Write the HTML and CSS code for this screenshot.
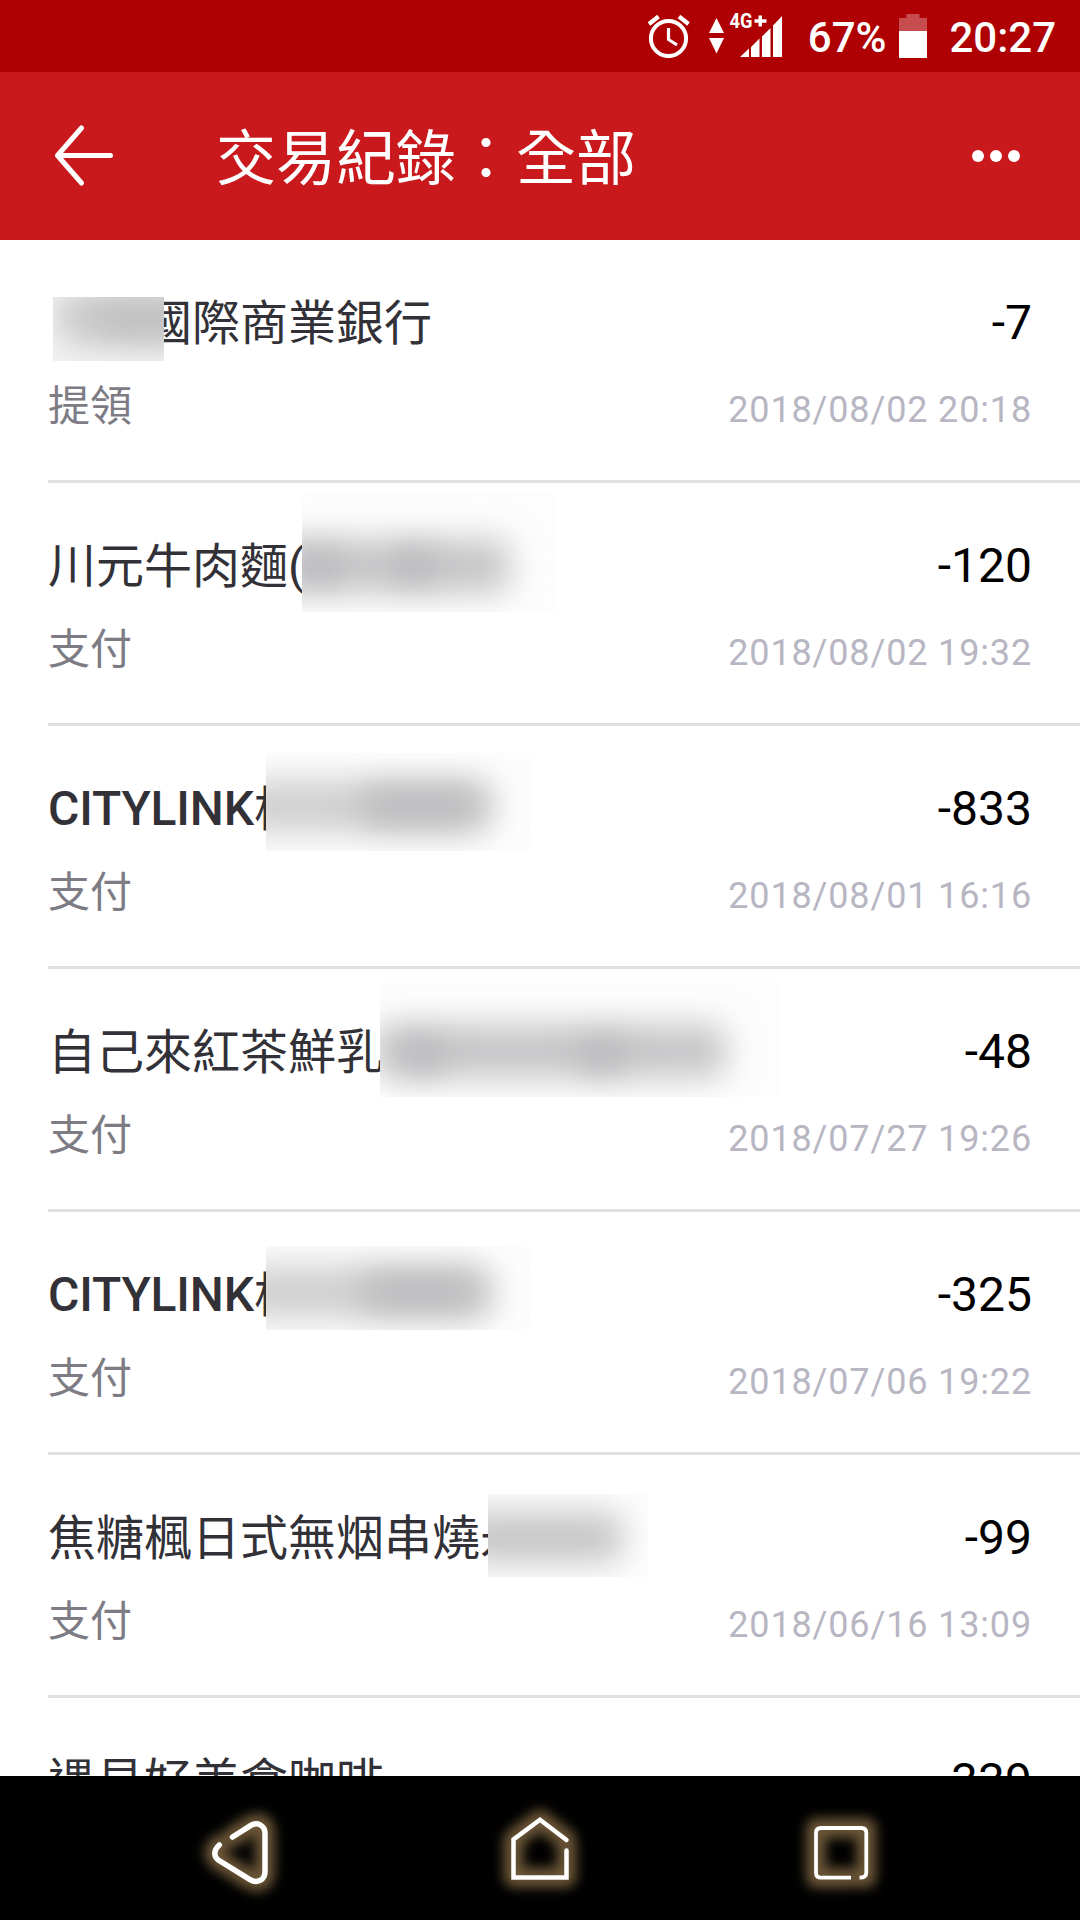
FILE: index.html
```html
<!DOCTYPE html>
<html lang="zh-Hant">
  <head>
    <meta charset="UTF-8" />
    <title>交易紀錄</title>
    <meta name="viewport" content="width=device-width, initial-scale=1.0" />
    <link rel="stylesheet" href="styles.css">
  </head>
  <body>
    <div class="status-bar">
      <svg class="alarm" width="42" height="44" viewBox="0 0 42 44" fill="none" stroke="#fff">
        <circle cx="20.5" cy="24.5" r="17.6" stroke-width="4" />
        <path d="M20.5 14v11.5l8.5 5.5" stroke-width="3.2" />
        <path d="M1 10 10.5 2.5M31 2.5l9.5 7.5" stroke-width="4.2" />
      </svg>
      <svg class="signal" width="76" height="48" viewBox="0 0 76 48" fill="#fff">
        <path d="M8.5 7 16 22H1zM1 27h15L8.5 42.5z" />
        <path d="M32 46 41 37.5V46zM43 36l8.5-8.5V46H43zM54 25.5l8.5-8.5V46H54zM65 14.5l9-9.5v41h-9z" />
        <text x="21.5" y="17" class="net" textLength="23" lengthAdjust="spacingAndGlyphs">4G</text>
        <path d="M46.5 8.2h4V4.5H54v3.7h4.5v3.5H54v3.8h-3.5v-3.8h-4z" />
      </svg>
      <span class="percent">67%</span>
      <svg class="battery" width="28" height="44" viewBox="0 0 28 44">
        <path d="M7.5 0h13v4H28v13H0V4h7.5z" fill="#c74c50" />
        <path d="M0 17h28v27H0z" fill="#fff" />
      </svg>
      <span class="clock">20:27</span>
    </div>

    <div class="app-bar">
      <svg class="back" width="62" height="64" viewBox="0 0 62 64" fill="none" stroke="#fff" stroke-width="5" stroke-linecap="round" stroke-linejoin="round">
        <path d="M30.5 4 6.5 31.5l24 27.5M6.5 31.500h53" />
      </svg>
      <h1>交易紀錄：全部</h1>
      <svg class="more" width="48" height="12" viewBox="0 0 48 12" fill="#fff">
        <circle cx="6" cy="6" r="6" />
        <circle cx="24" cy="6" r="6" />
        <circle cx="42" cy="6" r="6" />
      </svg>
    </div>

    <div class="list">
      <div class="item">
        <div class="left">
          <div class="name lead">國際商業銀行<span class="mask mask-bank"><i></i><i></i></span></div>
          <div class="type">提領</div>
        </div>
        <div class="right">
          <div class="amount">-7</div>
          <div class="date">2018/08/02 20:18</div>
        </div>
      </div>
      <div class="item">
        <div class="left">
          <div class="name">川元牛肉麵(<span class="mask mask-noodle"><i></i><i></i><i></i></span></div>
          <div class="type">支付</div>
        </div>
        <div class="right">
          <div class="amount">-120</div>
          <div class="date">2018/08/02 19:32</div>
        </div>
      </div>
      <div class="item">
        <div class="left">
          <div class="name"><b>CITYLINK</b>松<span class="mask mask-mall"><i></i><i></i></span></div>
          <div class="type">支付</div>
        </div>
        <div class="right">
          <div class="amount">-833</div>
          <div class="date">2018/08/01 16:16</div>
        </div>
      </div>
      <div class="item">
        <div class="left">
          <div class="name">自己來紅茶鮮乳<span class="mask mask-tea"><i></i><i></i><i></i></span></div>
          <div class="type">支付</div>
        </div>
        <div class="right">
          <div class="amount">-48</div>
          <div class="date">2018/07/27 19:26</div>
        </div>
      </div>
      <div class="item">
        <div class="left">
          <div class="name"><b>CITYLINK</b>松<span class="mask mask-mall low"><i></i><i></i></span></div>
          <div class="type">支付</div>
        </div>
        <div class="right">
          <div class="amount">-325</div>
          <div class="date">2018/07/06 19:22</div>
        </div>
      </div>
      <div class="item">
        <div class="left">
          <div class="name">焦糖楓日式無烟串燒永<span class="mask mask-grill"><i></i></span></div>
          <div class="type">支付</div>
        </div>
        <div class="right">
          <div class="amount">-99</div>
          <div class="date">2018/06/16 13:09</div>
        </div>
      </div>
      <div class="item">
        <div class="left">
          <div class="name">遇見好美食咖啡</div>
        </div>
        <div class="right">
          <div class="amount">-339</div>
        </div>
      </div>
    </div>

    <div class="nav-bar">
      <svg width="144" height="144" viewBox="0 0 144 144">
        <path class="glow" d="M64.5 61 82.5 49.5Q97 43 97 57V95Q97 110 82.5 104L50.5 84Q42 77 51 69" />
        <path class="line" stroke-width="5.5" d="M64.5 61 82.5 49.7C89 45.5 97 49 97 57.5V95.5C97 104 89 108 82 103.7L50.3 84C45.5 80.5 45.5 74 51.3 69" />
      </svg>
      <svg width="144" height="144" viewBox="0 0 144 144">
        <path class="glow" d="M98.5 64 72 43.5 45.5 63.5V101.5H98.5V74" />
        <path class="line" stroke-width="4.5" d="M98.5 64 72 43.8 45.5 63.5V101.5H98.5V74.5" />
      </svg>
      <svg width="144" height="144" viewBox="0 0 144 144">
        <path class="glow" d="M81 101.7H48V52H98.3V101.7H93" />
        <path class="line square" stroke-width="3.8" d="M83 101.7H53Q48 101.7 48 96.5V57Q48 52 53 52H93.3Q98.3 52 98.3 57V96.5Q98.3 101.7 91.5 101.7" />
      </svg>
    </div>
  </body>
</html>
```
FILE: styles.css
```css
* {
  box-sizing: border-box;
}

body {
  margin: 0;
  height: 1920px;
  display: flex;
  flex-direction: column;
  overflow: hidden;
  background: #fff;
  font-family: Roboto, "Noto Sans CJK TC", sans-serif;
}

.status-bar {
  height: 72px;
  flex-shrink: 0;
  display: flex;
  align-items: flex-start;
  justify-content: flex-end;
  padding-right: 24px;
  background: #af0003;
  color: #fff;
  font-size: 42px;
  font-weight: 500;
  line-height: 75px;
}

.alarm {
  margin: 14px 18px 0 0;
}

.signal {
  margin: 11px 24px 0 0;
  overflow: visible;
}

.net {
  font-size: 20px;
  font-weight: 700;
}

.battery {
  margin: 14px 22px 0 13px;
}

.app-bar {
  height: 168px;
  flex-shrink: 0;
  display: flex;
  align-items: center;
  padding: 0 60px 0 52px;
  background: #c9191d;
  color: #fff;
}

.back {
  margin-left: -1px;
}

h1 {
  flex: 1;
  margin: 0 0 0 103px;
  padding-top: 7px;
  font-size: 60px;
  font-weight: 400;
  line-height: 72px;
}

.list {
  flex: 1;
  min-height: 0;
  overflow: hidden;
}

.item {
  height: 243px;
  margin-left: 48px;
  padding: 53px 48px 0 0;
  display: flex;
  justify-content: space-between;
  border-bottom: 3px solid #e0e0e0;
}

.name {
  position: relative;
  height: 60px;
  color: #323137;
  font-size: 48px;
  line-height: 62px;
  white-space: nowrap;
}

.name b {
  position: relative;
  top: -1px;
  font-weight: 500;
  letter-spacing: -0.15px;
}

.lead {
  padding-left: 96px;
}

.type {
  margin-top: 29px;
  height: 50px;
  color: #7d7c85;
  font-size: 42px;
  line-height: 50px;
}

.right {
  text-align: right;
}

.amount {
  height: 60px;
  color: #000;
  font-size: 48px;
  line-height: 60px;
}

.date {
  margin-top: 32px;
  color: #b7b6c2;
  font-size: 36px;
  line-height: 50px;
  letter-spacing: 0.85px;
}

/* frosted patches over private parts of the names */
.mask {
  position: absolute;
  margin-top: -1px;
  overflow: hidden;
  background: #fdfdfd;
}

.mask i {
  position: absolute;
  border-radius: 16px;
  background: #c6c6c8;
  filter: blur(16px);
}

.mask-bank {
  left: 5px;
  top: 5px;
  width: 111px;
  height: 64px;
  background: #f3f3f3;
}

.mask-bank i {
  left: 4px;
  top: -4px;
  width: 140px;
  height: 50px;
  background: #cacaca;
}

.mask-bank i + i {
  left: 40px;
  top: 8px;
  width: 100px;
  height: 30px;
  background: #bebebe;
}

.mask-noodle {
  left: 254px;
  top: -42px;
  width: 253px;
  height: 119px;
}

.mask-noodle i {
  left: -30px;
  top: 46px;
  width: 238px;
  height: 54px;
}

.mask-noodle i + i,
.mask-tea i + i {
  left: -4px;
  top: 58px;
  width: 44px;
  height: 30px;
  background: #b6b6ba;
}

.mask-noodle i + i + i {
  left: 90px;
}

.mask-mall {
  left: 218px;
  top: -25px;
  width: 264px;
  height: 98px;
}

.mask-mall i {
  left: -30px;
  top: 27px;
  width: 257px;
  height: 52px;
  background: #cfcfd0;
}

.mask-mall i + i {
  left: 94px;
  top: 36px;
  width: 120px;
  height: 34px;
  background: #b9b9bc;
}

.mask-mall.low {
  top: -18px;
  height: 84px;
}

.mask-mall.low i {
  margin-top: -7px;
}

.mask-tea {
  left: 332px;
  top: -39px;
  width: 399px;
  height: 115px;
}

.mask-tea i {
  left: -6px;
  top: 42px;
  width: 352px;
  height: 54px;
}

.mask-tea i + i {
  left: 20px;
}

.mask-tea i + i + i {
  left: 200px;
}

.mask-grill {
  left: 440px;
  top: -13px;
  width: 160px;
  height: 83px;
}

.mask-grill i {
  left: -30px;
  top: 18px;
  width: 165px;
  height: 50px;
}

.nav-bar {
  height: 144px;
  flex-shrink: 0;
  display: flex;
  justify-content: space-between;
  padding: 0 168px;
  background: #000;
}

.glow {
  fill: none;
  stroke: #6b5637;
  stroke-width: 20;
  stroke-linejoin: round;
  stroke-linecap: round;
  filter: blur(6px);
}

.line {
  fill: none;
  stroke: #fff;
  stroke-linecap: round;
}

.square {
  stroke-linecap: butt;
}
```
